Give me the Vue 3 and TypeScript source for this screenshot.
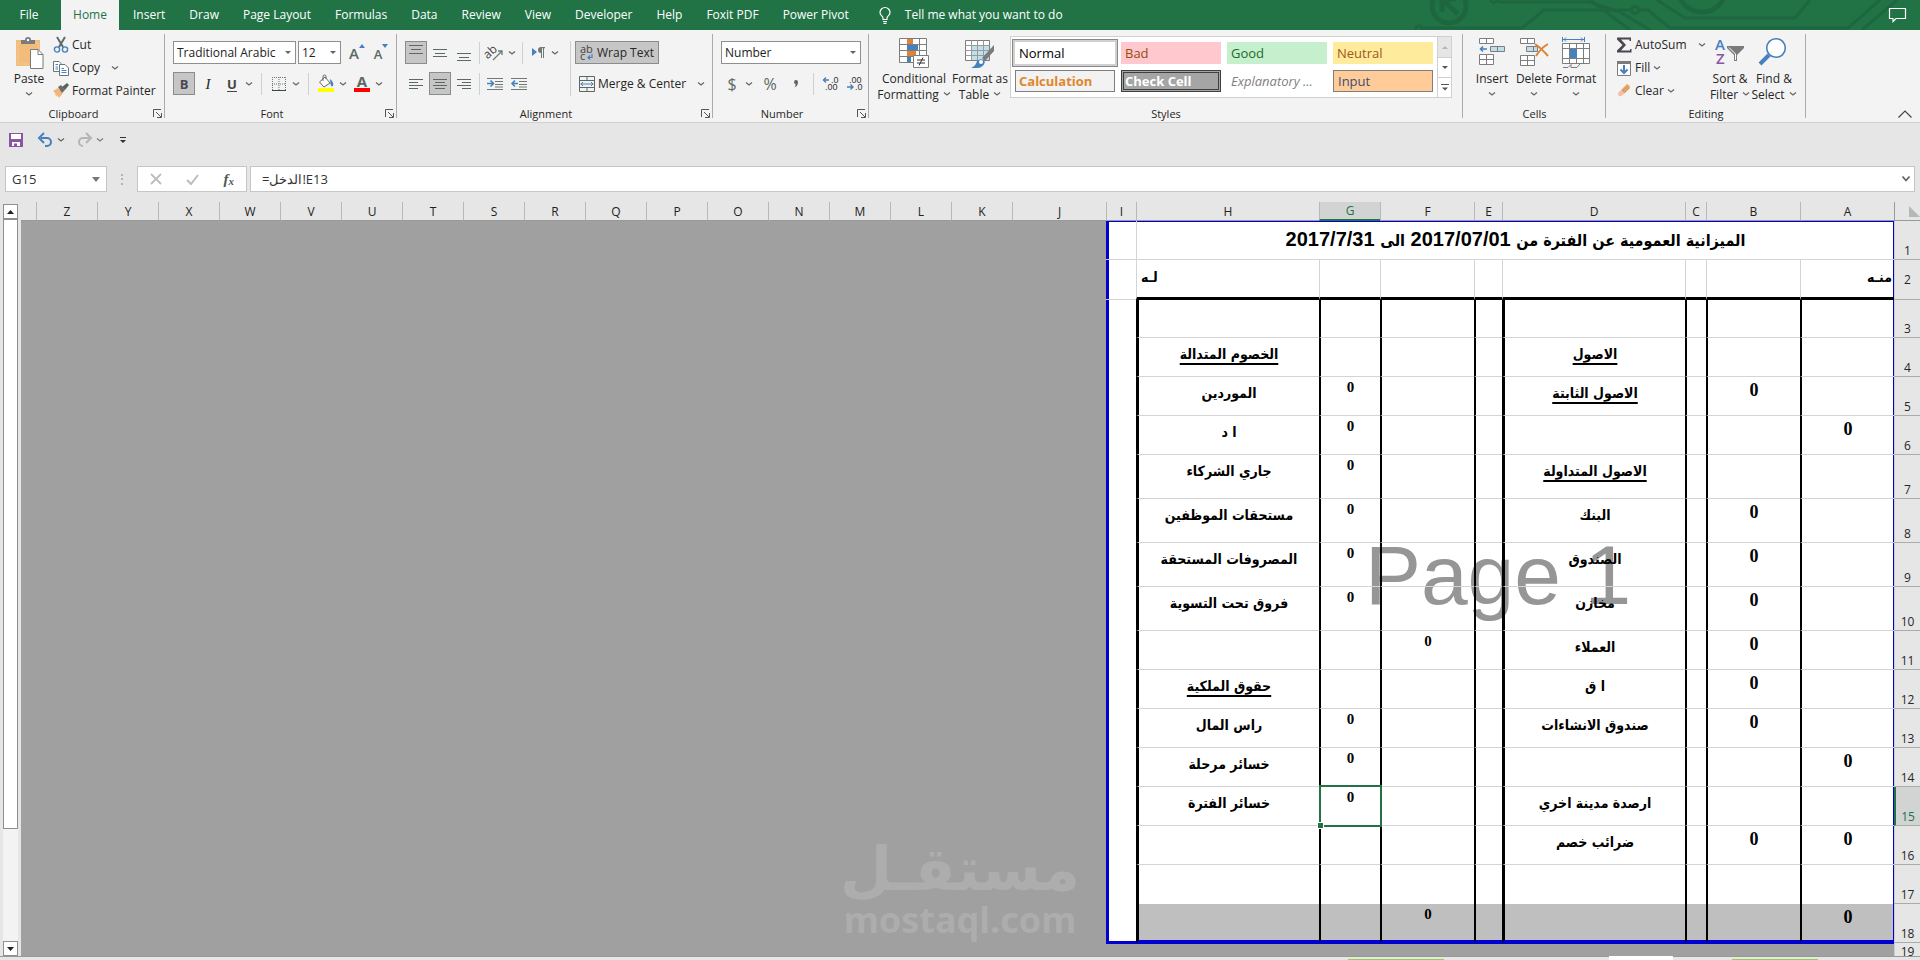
<script setup lang="ts">
import { h, ref } from 'vue'

interface Cell {
  text: string
  kind: 'label' | 'head' | 'small' | 'big'
}
interface Row {
  n: number
  cells: Record<string, Cell>
}

const Chevron = () =>
  h('svg', { class: 'chev', viewBox: '0 0 8 8', width: 8, height: 8, 'aria-hidden': 'true' }, [
    h('path', { d: 'M1 2.5 L4 5 L7 2.5', fill: 'none', stroke: 'currentColor', 'stroke-width': 1.3 }),
  ])
const Launcher = () =>
  h('svg', { viewBox: '0 0 9 9', width: 9, height: 9, 'aria-hidden': 'true' }, [
    h('path', { d: 'M.5 8V.5H8M3 3l5 5M8.5 4v4.5H4', fill: 'none', stroke: '#555', 'stroke-width': 1 }),
  ])

const tabs = ['Insert', 'Draw', 'Page Layout', 'Formulas', 'Data', 'Review', 'View', 'Developer', 'Help', 'Foxit PDF', 'Power Pivot']
const gallery = [
  { name: 'Normal', cls: 'g-normal' },
  { name: 'Bad', cls: 'g-bad' },
  { name: 'Good', cls: 'g-good' },
  { name: 'Neutral', cls: 'g-neutral' },
  { name: 'Calculation', cls: 'g-calc' },
  { name: 'Check Cell', cls: 'g-check' },
  { name: 'Explanatory ...', cls: 'g-expl' },
  { name: 'Input', cls: 'g-input' },
]

const pageCols = ['A', 'B', 'C', 'D', 'E', 'F', 'G', 'H']
const outerCols = ['K', 'L', 'M', 'N', 'O', 'P', 'Q', 'R', 'S', 'T', 'U', 'V', 'W', 'X', 'Y', 'Z']

const dText: Record<number, string> = {
  4: 'الاصول', 5: 'الاصول الثابتة', 7: 'الاصول المتداولة', 8: 'البنك', 9: 'الصندوق', 10: 'مخازن',
  11: 'العملاء', 12: 'ا ق', 13: 'صندوق الانشاءات', 15: 'ارصدة مدينة اخري', 16: 'ضرائب خصم',
}
const hText: Record<number, string> = {
  4: 'الخصوم المتدالة', 5: 'الموردين', 6: 'ا د', 7: 'جاري الشركاء', 8: 'مستحقات الموظفين', 9: 'المصروفات المستحقة',
  10: 'فروق تحت التسوية', 12: 'حقوق الملكية', 13: 'راس المال', 14: 'خسائر مرحلة', 15: 'خسائر الفترة',
}
const zeros: Record<string, number[]> = {
  A: [6, 14, 16, 18],
  B: [5, 8, 9, 10, 11, 12, 13, 16],
  F: [11, 18],
  G: [5, 6, 7, 8, 9, 10, 13, 14, 15],
}
const underlined: Record<string, number[]> = { D: [4, 5, 7], H: [4, 12] }

const rows: Row[] = []
for (let n = 3; n <= 18; n++) {
  const cells: Record<string, Cell> = {}
  for (const [col, list] of Object.entries({ D: dText, H: hText })) {
    if (list[n]) cells[col] = { text: list[n], kind: underlined[col].includes(n) ? 'head' : 'label' }
  }
  for (const [col, list] of Object.entries(zeros)) {
    if (list.includes(n)) cells[col] = { text: '0', kind: col < 'C' ? 'big' : 'small' }
  }
  rows.push({ n, cells })
}

const fontName = ref('Traditional Arabic')
const fontSize = ref('12')
const format = ref('Number')
const nameBox = ref('G15')
const formula = ref('=الدخل!E13')
</script>

<template>
  <div class="app">
    <nav class="tabs" aria-label="Ribbon tabs">
      <svg class="circuit" viewBox="0 0 510 30" width="510" height="30" aria-hidden="true">
        <g fill="none" stroke="#1e6640" stroke-width="3">
          <circle cx="39" cy="6" r="17" stroke-width="5" />
          <path d="M48 14L34 1M32 12V-1H46" stroke-width="5" />
          <circle cx="9" cy="29" r="3" />
          <path d="M13 28H112L134 10H221M229 10H238L260 28H438L470 0" />
          <circle cx="225" cy="10" r="3.5" />
          <circle cx="84" cy="-1" r="3.5" />
          <path d="M88 2H180L210 12L240 30M180 0L220 30M247 0L275 18H385L400 0M452 30L487 0" />
          <circle cx="292" cy="-12" r="24" stroke-width="5" />
        </g>
      </svg>
      <button class="tab file">File</button>
      <button class="tab active">Home</button>
      <button v-for="t in tabs" :key="t" class="tab">{{ t }}</button>
      <button class="tab tell">
        <svg viewBox="0 0 12 17" width="12" height="17" fill="none" stroke="#fff" stroke-width="1.2"><path d="M4 12.5V11C4 9 1 8.500 1 5.500A5 5 0 0 1 11 5.500C11 8.500 8 9 8 11V12.500ZM4 14.500H8M4.500 16.400H7.500" /></svg>
        <span>Tell me what you want to do</span>
      </button>
      <button class="comment" aria-label="Comments">
        <svg viewBox="0 0 17 15" width="17" height="15" fill="none" stroke="#fff"><path d="M.5 .5H16.500V10.500H7L4 13.500V10.500H.5Z" stroke-width="1.200" /></svg>
      </button>
    </nav>

    <div class="ribbon">
      <section class="group clipboard" aria-label="Clipboard">
        <div class="body">
          <button class="large paste">
            <svg viewBox="0 0 30 32" width="30" height="32">
              <rect x="2" y="3" width="24" height="26" fill="#f2bd7c" /><path d="M4 6H24V27H4Z" fill="none" stroke="#f7d49f" stroke-dasharray="1 1" />
              <path d="M7 7V3H11A3 3 0 0 1 17 3H21V7Z" fill="#7b7b7b" /><circle cx="14" cy="3" r="1.200" fill="#fff" />
              <path d="M16.500 12.500H24L29 17.500V31.500H16.500Z" fill="#fff" stroke="#7b7b7b" /><path d="M24 12.500V17.500H29" fill="none" stroke="#7b7b7b" />
            </svg>
            <span>Paste</span><span class="line2"><Chevron /></span>
          </button>
          <div class="stack">
            <button class="item">
              <svg viewBox="0 0 16 16" width="16" height="16" fill="none"><path d="M4 0L10 10M12 0L6 10" stroke="#5e6b66" stroke-width="2" /><circle cx="4" cy="12.500" r="2.600" stroke="#4680bd" stroke-width="1.400" /><circle cx="12" cy="12.500" r="2.600" stroke="#4680bd" stroke-width="1.400" /></svg>
              <span>Cut</span>
            </button>
            <button class="item">
              <svg viewBox="0 0 16 16" width="16" height="16" fill="#fff" stroke="#6b7772"><path d="M.5 1.500H6L9 4.500V11.500H.5Z" /><path d="M6.500 4.500H12L15.500 8V15.500H6.500Z" /><path d="M2.500 4.500H5M2.500 7H5M2.500 9H5M8.500 8.500H11M8.500 10.500H13.500M8.500 12.500H13.500" stroke="#4680bd" /></svg>
              <span>Copy</span><Chevron class="far" />
            </button>
            <button class="item">
              <svg viewBox="0 0 16 16" width="16" height="16"><path d="M0 8L5 5L10 10L6 15L4 12L3 14L2 10Z" fill="#f2b778" /><path d="M5 4L8 2L12 7L9 10Z" fill="#6b6b6b" /><path d="M9 4L14 0L16 2L12 7Z" fill="#52675e" /></svg>
              <span>Format Painter</span>
            </button>
          </div>
        </div>
        <footer><span>Clipboard</span><button class="launch" aria-label="Clipboard options"><Launcher /></button></footer>
      </section>

      <section class="group font" aria-label="Font">
        <div class="body rowsbody">
          <div class="row">
            <label class="combo w-font"><select v-model="fontName" aria-label="Font name"><option>Traditional Arabic</option></select></label>
            <label class="combo w-size"><select v-model="fontSize" aria-label="Font size"><option>12</option></select></label>
            <button class="tool grow-a" aria-label="Increase font size"><span class="big-a">A</span><svg viewBox="0 0 6 4" width="6" height="4"><path d="M0 4L3 0L6 4Z" fill="#4680bd" /></svg></button>
            <button class="tool grow-a" aria-label="Decrease font size"><span class="small-a">A</span><svg viewBox="0 0 6 4" width="6" height="4"><path d="M0 0L3 4L6 0Z" fill="#4680bd" /></svg></button>
          </div>
          <div class="row">
            <button class="tool on bold">B</button>
            <button class="tool ital">I</button>
            <button class="tool under">U</button>
            <button class="drop" aria-label="Underline options"><Chevron /></button>
            <i class="sep"></i>
            <button class="tool" aria-label="Borders"><svg viewBox="0 0 14 14" width="14" height="14" fill="none" stroke="#6d7a75"><path d="M.5 0V13M13.500 0V13M0 .5H14M7 0V13M0 7H14" stroke-dasharray="1 1" /><path d="M0 13.500H14" stroke="#444" /></svg></button>
            <button class="drop" aria-label="Border options"><Chevron /></button>
            <i class="sep"></i>
            <button class="tool" aria-label="Fill color"><svg viewBox="0 0 16 17" width="16" height="17"><path d="M7 2L12 8L6 12L1.500 7Z" fill="#fff" stroke="#666" /><path d="M5 6V1.500A1.500 1.500 0 0 1 8 1.500V4" fill="none" stroke="#666" /><path d="M12 4Q16 7 15 11Q13 12 12.500 9Z" fill="#4680bd" /><path d="M0 13H16V17H0Z" fill="#ff0" /></svg></button>
            <button class="drop" aria-label="Fill options"><Chevron /></button>
            <button class="tool fcolor" aria-label="Font color"><span>A</span></button>
            <button class="drop" aria-label="Font color options"><Chevron /></button>
          </div>
        </div>
        <footer><span>Font</span><button class="launch" aria-label="Font options"><Launcher /></button></footer>
      </section>

      <section class="group align" aria-label="Alignment">
        <div class="body rowsbody2">
          <div class="rows leftrows">
            <div class="row tight">
              <button class="tool on" aria-label="Top align"><svg viewBox="0 0 14 16" width="14" height="16" stroke="#5b6863"><path d="M0 .5H14M2 4.500H12M0 8.500H14" /></svg></button>
              <button class="tool" aria-label="Middle align"><svg viewBox="0 0 14 16" width="14" height="16" stroke="#5b6863"><path d="M0 4.500H14M2 8.500H12M0 11.500H14" /></svg></button>
              <button class="tool" aria-label="Bottom align"><svg viewBox="0 0 14 16" width="14" height="16" stroke="#5b6863"><path d="M0 8.500H14M2 12.500H12M0 15.500H14" /></svg></button>
              <i class="sep"></i>
              <button class="tool" aria-label="Orientation"><svg viewBox="0 0 17 16" width="17" height="16"><text x="-2" y="10" font-size="12" font-family="Open Sans, sans-serif" fill="#444" transform="rotate(-42 5 9)">ab</text><path d="M6 15L15 6M15 10V6H11" fill="none" stroke="#6d7a75" stroke-width="1.300" /></svg></button>
              <button class="drop" aria-label="Orientation options"><Chevron /></button>
              <i class="sep"></i>
              <button class="tool" aria-label="Text direction"><svg viewBox="0 0 13 11" width="13" height="11"><path d="M0 1L5 5L0 9Z" fill="#4680bd" /><path d="M9 0H13V1.200H12V11H11V1.200H10V11H9V6Q6 6 6 3Q6 0 9 0Z" fill="#6d7a75" /></svg></button>
              <button class="drop" aria-label="Direction options"><Chevron /></button>
            </div>
            <div class="row tight">
              <button class="tool" aria-label="Align left"><svg viewBox="0 0 14 12" width="14" height="12" stroke="#5b6863"><path d="M0 1.500H14M0 4.500H9M0 7.500H14M0 10.500H9" /></svg></button>
              <button class="tool on" aria-label="Center"><svg viewBox="0 0 14 12" width="14" height="12" stroke="#5b6863"><path d="M0 1.500H14M2 4.500H12M0 7.500H14M2 10.500H12" /></svg></button>
              <button class="tool" aria-label="Align right"><svg viewBox="0 0 14 12" width="14" height="12" stroke="#5b6863"><path d="M0 1.500H14M5 4.500H14M0 7.500H14M5 10.500H14" /></svg></button>
              <i class="sep"></i>
              <button class="tool" aria-label="Increase indent"><svg viewBox="0 0 16 14" width="16" height="14" fill="none"><path d="M0 1.500H16M8 4.500H16M8 7.500H16M0 12.500H16M8 10H16" stroke="#6d7a75" /><path d="M0 6.500H6M3.500 3.500L6.500 6.500L3.500 9.500" stroke="#4680bd" stroke-width="1.600" /></svg></button>
              <button class="tool" aria-label="Decrease indent"><svg viewBox="0 0 16 14" width="16" height="14" fill="none"><path d="M0 1.500H16M8 4.500H16M8 7.500H16M0 12.500H16M8 10H16" stroke="#6d7a75" /><path d="M1 6.500H7M4 3.500L1 6.500L4 9.500" stroke="#4680bd" stroke-width="1.600" /></svg></button>
            </div>
          </div>
          <i class="tallsep"></i>
          <div class="rows">
            <button class="wide on"><svg viewBox="0 0 14 16" width="14" height="16"><text x="0" y="8" font-size="11" font-family="Open Sans, sans-serif" fill="#444">ab</text><text x="0" y="15" font-size="11" font-family="Open Sans, sans-serif" fill="#444">c</text><path d="M12 9V12.500H8M10 10.500L8 12.500L10 14.500" fill="none" stroke="#4680bd" stroke-width="1.200" /></svg><span>Wrap Text</span></button>
            <button class="wide"><svg viewBox="0 0 16 16" width="16" height="16" fill="none"><path d="M.5 .5H15.500V15.500H.5ZM.5 4.500H15.500M.5 11.500H15.500M8 .5V4M8 12V15.500" stroke="#5b6863" /><path d="M1.500 8H14.500M4 6L2 8L4 10M12 6L14 8L12 10" stroke="#4680bd" /></svg><span>Merge &amp; Center</span><Chevron class="mid" /></button>
          </div>
        </div>
        <footer><span>Alignment</span><button class="launch" aria-label="Alignment options"><Launcher /></button></footer>
      </section>

      <section class="group number" aria-label="Number">
        <div class="body rowsbody">
          <div class="row"><label class="combo w-num"><select v-model="format" aria-label="Number format"><option>Number</option></select></label></div>
          <div class="row">
            <button class="tool sym">$</button>
            <button class="drop" aria-label="Currency options"><Chevron /></button>
            <button class="tool sym pct">%</button>
            <button class="tool sym comma" aria-label="Comma style"><svg viewBox="0 0 6 9" width="6" height="9"><path d="M1 3A2 2 0 1 1 5 3Q5 7 1.500 8.500Q3 6 2.500 5Q1 5 1 3Z" fill="#5b6863" /></svg></button>
            <i class="sep"></i>
            <button class="tool" aria-label="Increase decimal"><svg viewBox="0 0 16 15" width="16" height="15"><text x="8" y="7" class="dec">.0</text><text x="2" y="14" class="dec">.00</text><path d="M0 4H6M3 1.500L.5 4L3 6.500" fill="none" stroke="#4680bd" stroke-width="1.400" /></svg></button>
            <button class="tool" aria-label="Decrease decimal"><svg viewBox="0 0 16 15" width="16" height="15"><text x="2" y="7" class="dec">.00</text><text x="8" y="14" class="dec">.0</text><path d="M0 11H6M3.500 8.500L6 11L3.500 13.500" fill="none" stroke="#4680bd" stroke-width="1.400" /></svg></button>
          </div>
        </div>
        <footer><span>Number</span><button class="launch" aria-label="Number options"><Launcher /></button></footer>
      </section>

      <section class="group styles" aria-label="Styles">
        <div class="body">
          <button class="large cond">
            <svg viewBox="0 0 30 32" width="30" height="32">
              <path d="M.5 1.500H27.500V25.500H.5ZM.5 7.500H27.500M.5 13.500H27.500M.5 19.500H27.500M8.500 1.500V25.500M20.500 1.500V25.500" fill="#fff" stroke="#7d7d7d" />
              <path d="M8 2H14V7H8ZM8 14H17V19H8Z" fill="#dd8236" /><path d="M8 8H19V13H8ZM8 20H12V25H8Z" fill="#4680bd" />
              <path d="M14.500 18.500H29.500V30.500H14.500Z" fill="#fff" stroke="#7d7d7d" /><path d="M18 23H26M18 26H26M24 20.500L20 28.500" stroke="#333" />
            </svg>
            <span>Conditional</span><span class="line2">Formatting <Chevron /></span>
          </button>
          <button class="large fat">
            <svg viewBox="0 0 30 32" width="30" height="32">
              <path d="M.5 3.500H24.500V23.500H.5Z" fill="#fff" stroke="#7d7d7d" /><path d="M7 9H24V23H7Z" fill="#bfe0ea" /><path d="M.5 8.500H24.500M.5 13.500H24.500M.5 18.500H24.500M6.500 3.500V23.500M12.500 3.500V23.500M18.500 3.500V23.500" stroke="#9a9a9a" fill="none" />
              <path d="M29 8V14L20 24L17 21Z" fill="#7b7b7b" /><path d="M6 31Q11 29 12 24Q17 20 20 25Q18 31 12 31Z" fill="#4680bd" /><circle cx="16" cy="25" r="2" fill="#fff" />
            </svg>
            <span>Format as</span><span class="line2">Table <Chevron /></span>
          </button>
          <div class="gallery">
            <div class="swatches"><button v-for="g in gallery" :key="g.name" :class="['sw', g.cls]">{{ g.name }}</button></div>
            <div class="gscroll">
              <button class="dis" aria-label="Previous styles"><svg viewBox="0 0 6 3" width="6" height="3"><path d="M0 3L3 0L6 3Z" fill="#b5b5b5" /></svg></button>
              <button aria-label="Next styles"><svg viewBox="0 0 6 3" width="6" height="3"><path d="M0 0H6L3 3Z" fill="#555" /></svg></button>
              <button aria-label="More styles"><svg viewBox="0 0 8 7" width="8" height="7"><path d="M0 0H8V1H0ZM1 3.500H7L4 6.500Z" fill="#555" /></svg></button>
            </div>
          </div>
        </div>
        <footer><span>Styles</span></footer>
      </section>

      <section class="group cells" aria-label="Cells">
        <div class="body">
          <button class="large">
            <svg viewBox="0 0 28 32" width="28" height="32"><path d="M1.500 1.500H15.500V6.500H1.500ZM8.500 1.500V6.500M1.500 17.500H15.500V27.500H1.500ZM8.500 17.500V27.500M1.500 22.500H15.500" fill="#fff" stroke="#7d7d7d" /><path d="M12.500 9.500H26.500V14.500H12.500ZM19.500 9.500V14.500" fill="#bfe0ea" stroke="#7d7d7d" /><path d="M2 12H9M5 9.500L2.500 12L5 14.500" fill="none" stroke="#4680bd" stroke-width="1.600" /></svg>
            <span>Insert</span><span class="line2"><Chevron /></span>
          </button>
          <button class="large">
            <svg viewBox="0 0 30 32" width="30" height="32"><path d="M1.500 1.500H15.500V6.500H1.500ZM8.500 1.500V6.500M1.500 18.500H15.500V28.500H1.500ZM8.500 18.500V28.500M1.500 23.500H15.500" fill="#fff" stroke="#7d7d7d" /><path d="M7.500 9.500H18.500V14.500H7.500ZM14.500 9.500V14.500" fill="#bfe0ea" stroke="#7d7d7d" /><path d="M16 7Q22 11 29 19M29 7Q22 11 17 19" fill="none" stroke="#dd8236" stroke-width="2" /></svg>
            <span>Delete</span><span class="line2"><Chevron /></span>
          </button>
          <button class="large">
            <svg viewBox="0 0 28 32" width="28" height="32"><path d="M.5 6.500H27.500V26.500H.5ZM.5 11.500H27.500M.5 21.500H27.500M7.500 6.500V26.500M14.500 6.500V26.500M21.500 6.500V26.500" fill="#fff" stroke="#7d7d7d" /><path d="M8 12H15V21H8Z" fill="#4680bd" /><path d="M.5 0V5M22.500 0V5M1 2.500H22M4 .5L2 2.500L4 4.500M19 .5L21 2.500L19 4.500" fill="none" stroke="#4680bd" /><path d="M1 30.500H6L9 27.500V30.500H15L18 27" fill="none" stroke="#7d7d7d" /></svg>
            <span>Format</span><span class="line2"><Chevron /></span>
          </button>
        </div>
        <footer><span>Cells</span></footer>
      </section>

      <section class="group editing" aria-label="Editing">
        <div class="body">
          <div class="stack">
            <button class="item"><svg viewBox="0 0 16 16" width="16" height="16"><path d="M1 .5H15V4H13.500V2.500H5L10 8L5 13.500H14V12H15.500V15.500H1V13.500L6.500 8L1 2.500Z" fill="#4c4650" /></svg><span>AutoSum</span><Chevron class="far" /></button>
            <button class="item"><svg viewBox="0 0 16 16" width="16" height="16"><path d="M1.500 1.500H14.500V15.500H1.500Z" fill="#fff" stroke="#7d7d7d" /><path d="M1 1H15V4H1Z" fill="#7b7b7b" /><path d="M8 5V13M4.500 9.500L8 13L11.500 9.500" fill="none" stroke="#4680bd" stroke-width="2" /></svg><span>Fill</span><Chevron /></button>
            <button class="item"><svg viewBox="0 0 16 16" width="16" height="16"><path d="M5 7L11 1Q14 2 14 5L8 11Z" fill="#eda862" /><path d="M5 7L8 11L5 13Q2 14 2 10Z" fill="#f4bca6" /><path d="M7 8L12 3M9 9L13 5" stroke="#8a6bb0" stroke-dasharray="1 1.500" /></svg><span>Clear</span><Chevron /></button>
          </div>
          <button class="large sort">
            <svg viewBox="0 0 30 32" width="30" height="32"><text x="0" y="13" font-size="15" font-weight="600" font-family="Open Sans, sans-serif" fill="#4680bd">A</text><text x="1" y="27" font-size="15" font-weight="600" font-family="Open Sans, sans-serif" fill="#8c54a6">Z</text><path d="M12 9H29V11L22 18V24H19V18L12 11Z" fill="#7b7b7b" /><path d="M14 10.500L20.500 17V23" stroke="#fff" fill="none" /></svg>
            <span>Sort &amp;</span><span class="line2">Filter <Chevron /></span>
          </button>
          <button class="large">
            <svg viewBox="0 0 30 32" width="30" height="32"><circle cx="17" cy="11" r="9.300" fill="#fff" stroke="#4680bd" stroke-width="1.600" /><path d="M10 18L1 27" stroke="#4680bd" stroke-width="4" /></svg>
            <span>Find &amp;</span><span class="line2">Select <Chevron /></span>
          </button>
        </div>
        <footer><span>Editing</span></footer>
      </section>
      <button class="collapse" aria-label="Collapse the ribbon"><svg viewBox="0 0 14 8" width="14" height="8"><path d="M.5 7.500L7 1L13.500 7.500" fill="none" stroke="#444" stroke-width="1.200" /></svg></button>
    </div>

    <div class="qat">
      <button aria-label="Save"><svg viewBox="0 0 14 14" width="14" height="14"><path d="M0 0H14V14H0Z" fill="#8c54a6" /><path d="M2 1H12V6H2ZM3 9H11V13H3Z" fill="#fff" /><path d="M5 10.500H8V14H5Z" fill="#8c54a6" /></svg></button>
      <button aria-label="Undo"><svg viewBox="0 0 15 14" width="15" height="14"><path d="M3 5H9A4 4 0 0 1 9 13H7" fill="none" stroke="#4680bd" stroke-width="2" /><path d="M6 0L1 5L6 10" fill="none" stroke="#4680bd" stroke-width="2" /></svg></button>
      <button class="drop" aria-label="Undo list"><Chevron /></button>
      <button class="off" aria-label="Redo"><svg viewBox="0 0 15 14" width="15" height="14"><path d="M12 5H6A4 4 0 0 0 6 13" fill="none" stroke="#aaa" stroke-width="2" /><path d="M9 0L14 5L9 10" fill="none" stroke="#aaa" stroke-width="2" /></svg></button>
      <button class="drop off" aria-label="Redo list"><Chevron /></button>
      <button aria-label="Customize toolbar"><svg viewBox="0 0 6 6" width="6" height="6"><path d="M0 0H6V1H0ZM0 3H6L3 6Z" fill="#333" /></svg></button>
    </div>

    <div class="fbar">
      <label class="namebox"><input v-model="nameBox" aria-label="Name box" /></label>
      <span class="dots">⋮</span>
      <div class="fbtns">
        <button aria-label="Cancel"><svg viewBox="0 0 12 10" width="12" height="10"><path d="M1 0L11 10M11 0L1 10" stroke="#bdbdbd" stroke-width="1.800" /></svg></button>
        <button aria-label="Enter"><svg viewBox="0 0 13 11" width="13" height="11"><path d="M1 6L5 10L12 1" fill="none" stroke="#bdbdbd" stroke-width="2" /></svg></button>
        <button class="fx" aria-label="Insert function">f<small>x</small></button>
      </div>
      <label class="formula"><input v-model="formula" aria-label="Formula" dir="ltr" /><svg viewBox="0 0 8 6" width="8" height="6"><path d="M.5 .5L4 4.500L7.500 .5" fill="none" stroke="#5b6863" stroke-width="1.800" /></svg></label>
    </div>

    <main class="work">
      <div class="vscroll">
        <button aria-label="Scroll up"><svg viewBox="0 0 7 4" width="7" height="4"><path d="M0 4L3.500 0L7 4Z" fill="#222" /></svg></button>
        <div class="thumb"></div>
        <div class="track"></div>
        <button aria-label="Scroll down"><svg viewBox="0 0 7 4" width="7" height="4"><path d="M0 0H7L3.500 4Z" fill="#222" /></svg></button>
      </div>
      <div class="sheet">
        <div class="page"><span>Page 1</span></div>
        <svg class="brand" viewBox="0 0 240 130" width="240" height="130" aria-label="mostaql.com">
          <text x="120" y="64" class="brand-ar">مستقـل</text>
          <text x="120" y="107" class="brand-en">mostaql.com</text>
        </svg>
        <table dir="rtl">
          <colgroup>
            <col class="c-num" /><col class="c-a" /><col class="c-a" /><col class="c-c" /><col class="c-d" /><col class="c-e" /><col class="c-a" /><col class="c-g" /><col class="c-d" /><col class="c-i" /><col class="c-a" />
            <col v-for="c in outerCols" :key="c" class="c-g" /><col />
          </colgroup>
          <thead>
            <tr>
              <th class="corner"><svg viewBox="0 0 11 11" width="11" height="11"><path d="M0 0V11H11Z" fill="#b4b8b6" /></svg></th>
              <th v-for="c in [...pageCols, 'I', 'J', ...outerCols]" :key="c" scope="col" :class="{ cur: c === 'G' }">{{ c }}</th>
              <th class="last"></th>
            </tr>
          </thead>
          <tbody>
            <tr class="r1">
              <th scope="row">1</th>
              <td colspan="8" class="title"><span class="ar">الميزانية العمومية عن الفترة من</span> 2017/07/01 <span class="ar">الى</span> 2017/7/31</td>
              <td class="i"></td><td rowspan="19" colspan="18" class="void"></td>
            </tr>
            <tr class="r2">
              <th scope="row">2</th>
              <td v-for="c in pageCols" :key="c" :class="{ start: c === 'A', end: c === 'H' }">{{ c === 'A' ? 'منـه' : c === 'H' ? 'لـه' : '' }}</td>
              <td class="i"></td>
            </tr>
            <tr v-for="r in rows" :key="r.n" :class="['data', 'r' + r.n, { tall: r.n > 6 && r.n < 11 }]">
              <th scope="row" :class="{ cur: r.n === 15 }">{{ r.n }}</th>
              <td v-for="c in pageCols" :key="c" :class="['col-' + c, r.cells[c]?.kind, { sel: c === 'G' && r.n === 15 }]">{{ r.cells[c]?.text }}</td>
              <td class="i"></td>
            </tr>
            <tr class="r19"><th scope="row">19</th><td colspan="9" class="void"></td></tr>
          </tbody>
        </table>
      </div>
    </main>
    <div class="sheettabs"><i class="t1"></i><i class="t2"></i><i class="t3"></i></div>
  </div>
</template>

<style>
html, body { background: #e6e6e6; }
</style>

<style scoped>
.app { display: flex; flex-direction: column; height: 100vh; overflow: hidden; background: #e6e6e6; font: 12px/16px 'Open Sans', 'Noto Sans', sans-serif; color: #262626; }
.app *, .app *::before, .app *::after { box-sizing: border-box; }
button { border: 0; background: none; padding: 0; margin: 0; font: inherit; color: inherit; display: flex; align-items: center; justify-content: center; white-space: nowrap; flex: none; }
svg { display: block; flex: none; overflow: visible; }
.chev { color: #666; }

.tabs { position: relative; display: flex; height: 30px; flex: none; background: #217346; color: #fff; overflow: hidden; }
.circuit { position: absolute; right: 0; top: 0; }
.tab { padding: 0 12px; }
.tab.file { width: 58px; margin-right: 3px; }
.tab.active { width: 58px; background: #f3f3f3; color: #217346; margin-right: 2px; }
.tab.tell { margin-left: 6px; gap: 14px; }
.comment { position: relative; margin-left: auto; margin-right: 14px; }

.ribbon { display: flex; flex: none; height: 93px; background: #f3f3f3; border-bottom: 1px solid #d0d0d0; }
.group { position: relative; display: flex; flex-direction: column; flex: none; }
.group::after { content: ''; position: absolute; right: 0; top: 4px; bottom: 4px; width: 1px; background: #ababab; }
.body { display: flex; flex: 1; }
footer { position: relative; display: flex; justify-content: center; height: 17px; padding: 1px 18px 0 0; font-size: 11px; }
.launch { position: absolute; right: 3px; top: 4px; }
.clipboard { width: 165px; }
.font { width: 232px; }
.align { width: 316px; }
.number { width: 156px; }
.styles { width: 594px; }
.cells { width: 143px; }
.editing { width: 200px; }
.clipboard .body { padding-left: 5px; }
.large { flex-direction: column; justify-content: flex-start; padding-top: 7px; width: 42px; }
.large svg:first-child { margin-bottom: 2px; }
.line2 { display: flex; align-items: center; gap: 4px; height: 16px; }
.large.paste { width: 48px; }
.stack { display: flex; flex-direction: column; align-items: flex-start; padding-top: 3px; }
.item { height: 23px; gap: 3px; }
.item .far { margin-left: 8px; }
.rowsbody { flex-direction: column; gap: 8px; padding: 11px 0 0 8px; }
.rowsbody2 { padding: 11px 0 0 8px; }
.rows { display: flex; flex-direction: column; align-items: flex-start; gap: 8px; }
.leftrows { width: 165px; }
.row { display: flex; align-items: center; gap: 2px; height: 23px; }
.tool { width: 22px; height: 23px; }
.on { background: #c6c6c6; outline: 1px solid #8c8c8c; outline-offset: -1px; }
.drop { width: 12px; height: 23px; margin-left: -2px; }
.sep { width: 1px; height: 22px; margin: 0 4px; background: #d0d0d0; }
.tight .sep { margin: 0 2px; }
.tallsep { width: 1px; height: 55px; background: #d0d0d0; margin-right: 4px; }
.combo { position: relative; display: block; height: 23px; }
.combo::after { content: ''; position: absolute; right: 5px; top: 10px; border: 3px solid transparent; border-top-color: #5b6863; border-bottom: 0; }
.combo select { appearance: none; width: 100%; height: 23px; border: 1px solid #8f8f8f; border-radius: 0; background: #fff; font: inherit; color: #222; padding: 0 3px; }
.w-font { width: 123px; }
.w-size { width: 43px; }
.w-num { width: 140px; }
.grow-a { align-items: flex-start; color: #5b6863; font-weight: 600; padding-top: 3px; }
.grow-a:first-of-type { margin-left: 3px; }
.big-a { font-size: 15px; line-height: 18px; }
.small-a { font-size: 13px; line-height: 20px; }
.bold { font-weight: 700; color: #4b4650; font-size: 13px; }
.ital { font-family: 'Liberation Serif', serif; font-style: italic; font-size: 15px; }
.under { font-weight: 700; text-decoration: underline; font-size: 13px; color: #444; text-underline-offset: 2px; }
.fcolor span { height: 16px; width: 16px; border-bottom: 4px solid #f00; font-weight: 700; font-size: 15px; line-height: 11px; color: #5b6863; }
.wide { height: 23px; padding: 0 6px 0 4px; gap: 3px; }
.wide .mid { margin-left: 8px; }
.wide.on { padding: 0 5px; }
.sym { font-size: 16px; color: #5b6863; }
.pct { width: 26px; }
.dec { font: 9px 'Liberation Sans', sans-serif; fill: #333; }
.large.cond { width: 78px; margin-left: 5px; padding-left: 2px; }
.large.fat { width: 56px; }
.gallery { display: flex; width: 442px; height: 62px; margin: 6px 0 0 2px; background: #fff; border: 1px solid #d0d0d0; }
.swatches { display: grid; grid-template-columns: repeat(4, 100px); grid-template-rows: 22px 22px; gap: 6px; padding: 5px 0 0 4px; width: 426px; }
.sw { justify-content: flex-start; padding: 0 0 1px 4px; font-size: 13px; }
.g-normal { background: #fff; color: #000; outline: 1px solid #888; outline-offset: 2px; box-shadow: 0 0 0 2px #d0d0d0; }
.g-bad { background: #ffc7ce; color: #9c4a0d; }
.g-good { background: #c6efce; color: #1a6b2c; }
.g-neutral { background: #ffeb9c; color: #9c5720; }
.g-calc { background: #f2f2f2; border: 1px solid #7f7f7f; color: #e0862c; font-weight: 700; padding-left: 3px; }
.g-check { background: #a5a5a5; border: 3px double #3f3f3f; color: #fff; font-weight: 700; padding-left: 1px; }
.g-expl { color: #7f7f7f; font-style: italic; }
.g-input { background: #ffcc99; border: 1px solid #7f7f7f; color: #3f4a76; }
.gscroll { flex: 1; display: grid; grid-template-rows: 20px 20px 1fr; border-left: 1px solid #d0d0d0; }
.gscroll button + button { border-top: 1px solid #d0d0d0; }
.gscroll .dis { background: #e6e6e6; }
.styles footer, .cells footer, .editing footer { padding-right: 0; }
.cells .body { padding-left: 8px; }
.editing .body { padding-left: 10px; }
.editing .stack { width: 91px; }
.large.sort { width: 46px; }
.collapse { margin: auto 8px 4px auto; }

.qat { display: flex; flex: none; height: 43px; padding: 0 0 10px 7px; align-items: center; }
.qat button { width: 18px; height: 20px; }
.qat button + button { margin-left: 11px; }
.qat .drop, .qat button.drop { width: 10px; margin-left: 2px; }
.qat .drop + button { margin-left: 9px; }
.qat .off { opacity: 0.8; }

.fbar { display: flex; flex: none; height: 26px; padding: 0 5px; }
.namebox, .formula, .fbtns { position: relative; display: flex; background: #fff; border: 1px solid #c6c6c6; }
.namebox { width: 102px; }
.namebox::after { content: ''; position: absolute; right: 6px; top: 10px; border: 4px solid transparent; border-top: 5px solid #777; border-bottom: 0; }
.fbar input { flex: 1; min-width: 0; border: 0; background: none; font: inherit; font-size: 13px; color: #333; padding: 0 6px; outline: 0; }
.dots { width: 30px; text-align: center; line-height: 26px; color: #999; }
.fbtns { width: 110px; justify-content: space-around; }
.fx { font: italic bold 15px/20px 'Liberation Serif', serif; color: #4c5a54; }
.fx small { font-size: 11px; padding-top: 3px; }
.formula { flex: 1; margin-left: 3px; align-items: center; padding-right: 4px; }
.fbar .formula input { padding: 0 11px; align-self: stretch; }

.work { display: flex; flex: 1; min-height: 0; padding-top: 10px; }
.vscroll { display: flex; flex-direction: column; width: 15px; margin: 2px 3px 0; flex: none; }
.vscroll button { height: 15px; background: #fff; border: 1px solid #8f8f8f; }
.thumb { flex: 611; background: #fff; border: 1px solid #8f8f8f; }
.track { flex: 112; background: #f3f3f3; }
.sheet { position: relative; flex: 1; min-width: 0; overflow: hidden; background: linear-gradient(#e6e6e6 19px, #a0a0a0 19px); }
.page { position: absolute; right: 26px; top: 19px; width: 788px; height: 723px; background: #fff; border: solid #0000d0; border-width: 1px 1px 3px 3px; display: flex; align-items: center; justify-content: center; padding: 0 6px 14px 0; font: 84px/100px 'Liberation Sans', sans-serif; color: #969696; }
.brand { position: absolute; right: 840px; bottom: 0; fill: #adadad; }
.brand text { text-anchor: middle; }
.brand-ar { font: bold 60px 'DejaVu Sans', sans-serif; }
.brand-en { font: bold 36px 'Noto Sans', sans-serif; }

table { position: relative; width: 100%; table-layout: fixed; border-collapse: separate; border-spacing: 0; }
.c-num { width: 26px; }
.c-a { width: 94px; }
.c-c { width: 21px; }
.c-d { width: 183px; }
.c-e { width: 28px; }
.c-g { width: 61px; }
.c-i { width: 30px; }
th { font-weight: 400; padding: 0; font-size: 12px; }
thead th { height: 19px; background: #e6e6e6; border-left: 1px solid #b8b8b8; border-bottom: 1px solid #999; line-height: 16px; padding-top: 1px; color: #222; }
thead th.last { border-left: 0; }
thead th.cur { background: #d2d4d3; color: #217346; border-bottom: 2px solid #217346; padding-top: 0; }
thead .corner { padding: 0 0 0 11px; border-left-color: #999; }
tbody th { background: #e6e6e6; border-bottom: 1px solid #ababab; border-left: 1px solid #ccc; vertical-align: bottom; line-height: 16px; text-align: center; }
tbody th.cur { background: #d2d4d3; color: #217346; border-left: 2px solid #217346; }
td { padding: 0; height: 39px; border-bottom: 1px solid #d4d4d4; border-left: 1px solid #d4d4d4; vertical-align: top; text-align: center; white-space: nowrap; overflow: hidden; color: #000; font: bold 14px/32px 'DejaVu Sans Condensed', 'DejaVu Sans', sans-serif; }
td.i { border: 0; }
.r1 td.i { border-bottom: 1px solid #d4d4d4; }
td.void { border: 0; height: auto; }
td.title { font: bold 20px/36px 'Liberation Sans', sans-serif; }
.title .ar { font: bold 16px/20px 'DejaVu Sans Condensed', 'DejaVu Sans', sans-serif; }
.r2 td { height: 40px; border-bottom: 3px solid #000; line-height: 34px; }
.r2 th { vertical-align: middle; }
.r2 td.i { border-bottom: 1px solid #d4d4d4; }
.r2 .start { text-align: right; padding-right: 2px; }
.r2 .end { text-align: left; padding-left: 4px; }
.data td { border-left: 2px solid #000; }
.data td.col-D, .data td.col-H { border-left: 3px solid #000; }
.data td.i { border: 0; }
.r3 td { height: 38px; }
.tall td { height: 44px; }
.head { text-decoration: underline; text-decoration-thickness: 2px; text-underline-offset: 4px; }
td.small { font: bold 15px/20px 'Liberation Serif', serif; }
td.big { font: bold 18px/26px 'Liberation Serif', serif; }
.r17 td { border-bottom: 0; }
.r18 td { background: #bfbfbf; border-bottom: 3px solid #0000d0; }
.r18 td.col-A { box-shadow: inset -1px 0 #0000d0; }
.r18 td.i { background: none; }
.data td.sel { position: relative; overflow: visible; }
.sel::before { content: ''; position: absolute; inset: -2px -2px -2px -2px; border: 2px solid #217346; }
.sel::after { content: ''; position: absolute; left: -3px; bottom: -3px; width: 5px; height: 5px; background: #217346; outline: 1px solid #fff; }
.r19 th { height: 39px; vertical-align: top; line-height: 18px; }

.sheettabs { position: relative; display: flex; flex: none; height: 4px; border-top: 1px solid #999; align-items: flex-end; justify-content: flex-end; padding-right: 102px; }
.sheettabs i { height: 1px; background: #92d050; }
.t1 { width: 96px; margin-right: 165px; }
.sheettabs .t2 { width: 64px; height: 4px; background: #fff; margin-right: 59px; }
.t3 { width: 86px; }
</style>
